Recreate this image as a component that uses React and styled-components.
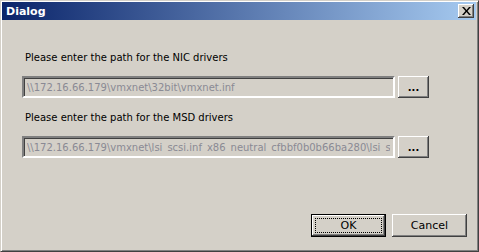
import React from 'react';
import styled, { createGlobalStyle } from 'styled-components';

const GlobalStyle = createGlobalStyle`
    html, body {
        margin: 0;
        padding: 0;
        background: #d4d0c8;
    }
    body {
        font-family: Tahoma, 'DejaVu Sans', 'Liberation Sans', sans-serif;
        font-size: 10px;
    }
`;

export default function App() {
    return (
        <>
            <GlobalStyle />
            <Window>
                <TitleBar>
                    <Title>Dialog</Title>
                    <CloseButton aria-label='close'>
                        <svg width='9' height='8' viewBox='0 0 9 8'>
                            <path d='M0 0h2l2.5 3 2.5-3h2L5.5 4 9 8H7L4.5 5 2 8H0l3.5-4z' fill='#000' />
                        </svg>
                    </CloseButton>
                </TitleBar>
                <Body>
                    <Field>
                        <Label>Please enter the path for the NIC drivers</Label>
                        <Row>
                            <PathInput disabled value='\\172.16.66.179\vmxnet\32bit\vmxnet.inf' readOnly />
                            <Browse>...</Browse>
                        </Row>
                    </Field>
                    <Field>
                        <Label>Please enter the path for the MSD drivers</Label>
                        <Row>
                            <PathInput disabled value='\\172.16.66.179\vmxnet\lsi_scsi.inf_x86_neutral_cfbbf0b0b66ba280\lsi_scsi.inf' readOnly />
                            <Browse>...</Browse>
                        </Row>
                    </Field>
                    <Footer>
                        <Button focused>OK</Button>
                        <Button>Cancel</Button>
                    </Footer>
                </Body>
            </Window>
        </>
    );
}

const Window = styled.div`
    width: 479px;
    height: 252px;
    box-sizing: border-box;
    background: #d4d0c8;
    border-top: 1px solid #d4d0c8;
    border-left: 1px solid #d4d0c8;
    border-right: 1px solid #404040;
    border-bottom: 1px solid #404040;
    box-shadow: inset 1px 1px 0 #fff, inset -1px -1px 0 #808080;
    padding: 1px 2px 1px 1px;
    display: flex;
    flex-direction: column;
`;

const TitleBar = styled.div`
    height: 18px;
    display: flex;
    align-items: center;
    justify-content: space-between;
    padding: 0 2px 0 4px;
    background: linear-gradient(to right, #0a246a, #a6caf0);
`;

const Title = styled.span`
    color: #fff;
    font-weight: bold;
    font-size: 11px;
`;

const CloseButton = styled.button`
    width: 16px;
    height: 14px;
    padding: 0;
    display: flex;
    align-items: center;
    justify-content: center;
    background: #d4d0c8;
    border: none;
    box-shadow: inset -1px -1px 0 #404040, inset 1px 1px 0 #fff, inset -2px -2px 0 #808080;
`;

const Body = styled.div`
    flex: 1;
    display: flex;
    flex-direction: column;
    padding: 31px 0 0 20px;
`;

const Field = styled.div`
    display: flex;
    flex-direction: column;
    gap: 12px;
    margin-bottom: 13px;
`;

const Label = styled.span`
    color: #000;
    padding-left: 3px;
    line-height: 13px;
`;

const Row = styled.div`
    display: flex;
    gap: 3px;
    height: 22px;
`;

const PathInput = styled.input`
    width: 373px;
    height: 22px;
    box-sizing: border-box;
    padding: 0 3px;
    font: inherit;
    color: #8a8a94;
    background: #d4d0c8;
    border-top: 2px solid #808080;
    border-left: 2px solid #808080;
    border-right: 2px solid #fff;
    border-bottom: 2px solid #fff;
    box-shadow: inset 1px 1px 0 #404040;
    outline: none;
`;

const Button = styled.button`
    width: 75px;
    height: 23px;
    box-sizing: border-box;
    font: inherit;
    font-size: 11px;
    color: #000;
    background: #d4d0c8;
    border: ${props => (props.focused ? '1px solid #000' : 'none')};
    box-shadow: inset -1px -1px 0 #404040, inset 1px 1px 0 #fff, inset -2px -2px 0 #808080;
    padding: 0;
    position: relative;
    &::after {
        content: '';
        display: ${props => (props.focused ? 'block' : 'none')};
        position: absolute;
        inset: 3px;
        border: 1px dotted #000;
    }
`;

const Browse = styled(Button)`
    width: 31px;
    height: 22px;
    font-size: 10px;
    font-weight: bold;
`;

const Footer = styled.div`
    margin-top: auto;
    display: flex;
    justify-content: flex-end;
    gap: 6px;
    padding: 0 9px 13px 0;
`;
